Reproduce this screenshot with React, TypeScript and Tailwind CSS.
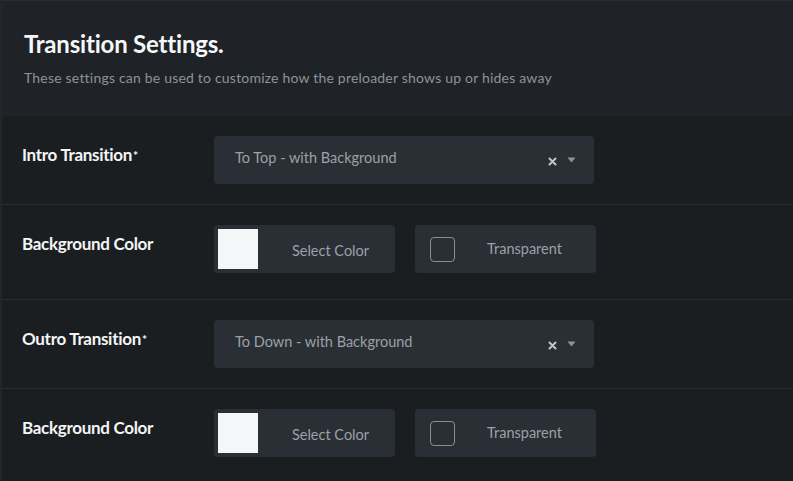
import React from "react";

const font = { fontFamily: "Lato, 'Noto Sans', sans-serif" };

function Label({ text, req }: { text: string; req?: boolean }) {
  return (
    <div className="w-[192px] shrink-0 pt-[9px] text-[17px] font-bold leading-[20px] text-[#f4f5f6] tracking-[-0.3px]">
      {text}
      {req && <sup className="text-[12px] ml-[1px] relative top-[-1px]">*</sup>}
    </div>
  );
}

function Select({ value }: { value: string }) {
  return (
    <div className="w-[380px] h-[48px] rounded-[4px] bg-[#2a2f35] flex items-center pl-[21px] pr-[18px]">
      <span className="flex-1 text-[14.5px] text-[#9ba1a7] -mt-[4px]">{value}</span>
      <svg width="9" height="9" viewBox="0 0 9 9" className="mr-[10px] mt-[2px]">
        <path d="M1.5 1.5L7.5 7.5M7.5 1.5L1.5 7.5" stroke="#c3c7cb" strokeWidth="2" strokeLinecap="round" />
      </svg>
      <svg width="9" height="6" viewBox="0 0 9 6">
        <path d="M0.5 0.5H8.5L4.5 5.5Z" fill="#8e9399" />
      </svg>
    </div>
  );
}

function ColorRow() {
  return (
    <div className="flex gap-[20px]">
      <div className="w-[181px] h-[48px] rounded-[4px] bg-[#2a2f35] flex items-center pl-[4px]">
        <div className="w-[40px] h-[40px] bg-[#f5f6f7]" />
        <span className="flex-1 text-center text-[14.5px] text-[#9ba1a7] mt-[3px] pl-[8px]">Select Color</span>
      </div>
      <div className="w-[181px] h-[48px] rounded-[4px] bg-[#2a2f35] flex items-center pl-[15px]">
        <div className="w-[25px] h-[25px] rounded-[4px] border-[1.5px] border-[#8b9096]" />
        <span className="flex-1 text-center text-[14.5px] text-[#9ba1a7] pr-[2px]">Transparent</span>
      </div>
    </div>
  );
}

export default function App() {
  return (
    <div className="w-[793px] h-[481px] overflow-hidden bg-[#1b1e21] border-l-2 border-[#22262a]" style={font}>
      <div className="h-[116px] bg-[#1f2327] border-t border-[#2a2e33] pl-[22px] pt-[28px]">
        <h1 className="text-[24px] font-bold text-[#f6f7f8] leading-[30px] tracking-[-0.2px]">Transition Settings.</h1>
        <p className="mt-[11px] text-[14px] text-[#8c939a] leading-[16px] tracking-[0.2px]">
          These settings can be used to customize how the preloader shows up or hides away
        </p>
      </div>
      <div className="flex px-[20px] pt-[20px] pb-[20px] border-b border-[#2a2e32]">
        <Label text="Intro Transition" req />
        <Select value="To Top - with Background" />
      </div>
      <div className="flex px-[20px] pt-[20px] pb-[26px] border-b border-[#2a2e32]">
        <Label text="Background Color" />
        <ColorRow />
      </div>
      <div className="flex px-[20px] pt-[20px] pb-[20px] border-b border-[#2a2e32]">
        <Label text="Outro Transition" req />
        <Select value="To Down - with Background" />
      </div>
      <div className="flex px-[20px] pt-[20px] pb-[26px]">
        <Label text="Background Color" />
        <ColorRow />
      </div>
    </div>
  );
}
